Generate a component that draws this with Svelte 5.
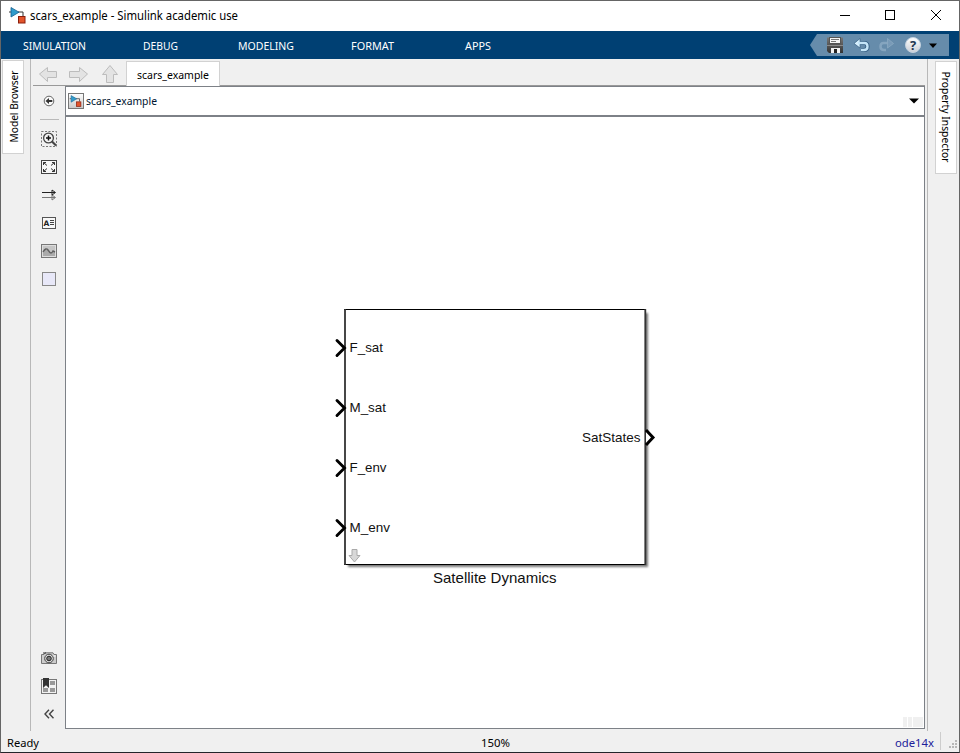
<script>
  const menus = [
    { label: 'SIMULATION', width: 106, fit: 63 },
    { label: 'DEBUG', width: 106, fit: 35 },
    { label: 'MODELING', width: 106, fit: 56 },
    { label: 'FORMAT', width: 106, fit: 43 },
    { label: 'APPS', width: 106, fit: 26 }
  ];
  const inputs = [
    { name: 'F_sat', y: 348, w: 33.5 },
    { name: 'M_sat', y: 408, w: 36.5 },
    { name: 'F_env', y: 468, w: 37 },
    { name: 'M_env', y: 528, w: 40.5 }
  ];
</script>

{#snippet label(text, width, height, size, base, color = '#000', family = 'Noto Sans')}
  <svg class="label" {width} {height}>
    <text x="0" y={base} font-size={size} font-family="'{family}', sans-serif" fill={color} textLength={width} lengthAdjust="spacingAndGlyphs">{text}</text>
  </svg>
{/snippet}

{#snippet modelMark()}
  <path d="M9 5H14V9" fill="none" stroke="#333" />
  <path d="M0 5H2" stroke="#333" />
  <path d="M2 .5V10L10 5.2Z" fill="#319ccc" stroke="#16618f" stroke-width=".8" />
  <rect x="9.5" y="9.5" width="6.5" height="6.5" fill="#e2542b" stroke="#8a1e0c" />
{/snippet}

<div class="window">
  <header class="title">
    <svg class="appicon" width="17" height="18" viewBox="0 0 17 18">{@render modelMark()}</svg>
    {@render label('scars_example - Simulink academic use', 208, 20, 12, 14)}
    <svg class="controls" width="120" height="30" viewBox="0 0 120 30" fill="none" stroke="#000" shape-rendering="crispEdges">
      <path d="M1 14.5H11" />
      <rect x="46.5" y="9.5" width="9" height="9" />
      <path d="M92 9L102 19M102 9L92 19" shape-rendering="auto" />
    </svg>
  </header>

  <nav class="ribbon">
    {#each menus as m}
      <div class="menu" style:width="{m.width}px">{@render label(m.label, m.fit, 18, 11, 14, '#fff')}</div>
    {/each}
    <svg class="quick" width="139" height="22" viewBox="810 34 139 22">
      <defs>
        <linearGradient id="disk" x2="0" y2="1"><stop stop-color="#777" /><stop offset="1" stop-color="#333" /></linearGradient>
        <linearGradient id="help" x2="0" y2="1"><stop stop-color="#fff" /><stop offset="1" stop-color="#c9ced6" /></linearGradient>
      </defs>
      <path d="M810 45L817 34H949V56H817Z" fill="#668cab" />
      <path d="M827 37.5H843V53H829L827 51Z" fill="url(#disk)" />
      <rect x="829.5" y="37.5" width="11" height="6" fill="#f5f5f5" stroke="#555" />
      <path d="M831 39.5H839M831 41.5H836" stroke="#777" />
      <path d="M827 45.5H843" stroke="#8a8a8a" />
      <path d="M831 48H840V53H831Z" fill="#f2f2f2" /><path d="M834 49H837V53H834Z" fill="#222" />
      <path d="M858 43H864.5Q867.5 43 867.5 46.5T864 50H861" fill="none" stroke="#355f83" stroke-width="4.2" />
      <path d="M854 43.5L860 38.5V48Z" fill="#d7f0fd" stroke="#355f83" stroke-width=".7" />
      <path d="M858 43H864.5Q867.5 43 867.5 46.5T864 50H861" fill="none" stroke="#c4e5f8" stroke-width="2.4" />
      <path d="M889 43H883.5Q880.5 43 880.5 46.5T884 50H886" fill="none" stroke="#85a5bf" stroke-width="2.5" />
      <path d="M893.5 43.5L887.5 38.5V48Z" fill="#789ab7" stroke="#8caac2" stroke-width=".8" />
      <circle cx="913" cy="45" r="7.5" fill="url(#help)" stroke="#c4d2df" />
      <text x="913" y="50" text-anchor="middle" font-family="Open Sans, sans-serif" font-size="13" font-weight="700" fill="#203650">?</text>
      <path d="M929 43.5H937L933 48Z" fill="#000" />
    </svg>
  </nav>

  <main class="body">
    <aside class="rail left">
      <div class="sidetab model">
        <svg width="20" height="91" viewBox="0 0 20 91"><text transform="translate(15 81.5) rotate(-90)" font-family="Noto Sans, sans-serif" font-size="11.3" textLength="72" lengthAdjust="spacingAndGlyphs">Model Browser</text></svg>
      </div>
    </aside>

    <section class="editor">
      <div class="tabs">
        <svg width="93" height="26" viewBox="33 59 93 26" fill="#e3e3e3" stroke="#bcbcbc">
          <path d="M39.5 74L47.5 67.5V71.5H56.5V77.5H47.5V81.5Z" />
          <path d="M87.5 74L79.5 67.5V71.5H69.5V77.5H79.5V81.5Z" />
          <path d="M110 65.5L117.5 74.5H113.5V82.5H106.5V74.5H102.5Z" />
        </svg>
        <div class="tab">{@render label('scars_example', 72, 18, 11.3, 14)}</div>
      </div>

      <div class="work">
        <div class="palette">
          <div class="tool first"><svg width="12" height="12" viewBox="0 0 12 12"><circle cx="6" cy="6" r="4.8" fill="#f8f8f8" stroke="#666" /><path d="M2.5 6L6 3V5H9.3V7H6V9Z" fill="#333" /></svg></div>
          <div class="rule"></div>
          <div class="tool"><svg width="16" height="16" viewBox="0 0 16 16"><rect x=".5" y=".5" width="15" height="15" fill="none" stroke="#777" stroke-dasharray="2 1.5" /><circle cx="7.5" cy="7" r="4.9" fill="#f5f5f5" stroke="#444" stroke-width="1.3" /><path d="M5 7H10M7.5 4.5V9.5" stroke="#111" stroke-width="1.5" /><path d="M11 10.5L15 14.5" stroke="#444" stroke-width="2.2" /></svg></div>
          <div class="tool"><svg width="16" height="14" viewBox="0 0 16 14"><rect x=".5" y=".5" width="15" height="13" fill="#f7f7f7" stroke="#444" /><path d="M2.5 5V2.5H5M2.5 2.5L6 5.5M11 2.5H13.5V5M13.5 2.5L10 5.5M2.5 9V11.5H5M2.5 11.5L6 8.5M13.5 9V11.5H11M13.5 11.5L10 8.5" fill="none" stroke="#333" /></svg></div>
          <div class="tool"><svg width="16" height="12" viewBox="0 0 16 12" fill="#eee"><path d="M1 8.5H14M11 6L14.5 8.5L11 11Z" stroke="#777" /><path d="M1 3.5H14M11 1L14.5 3.5L11 6Z" stroke="#222" /></svg></div>
          <div class="tool"><svg width="14" height="12" viewBox="0 0 14 12"><rect x=".5" y=".5" width="13" height="11" fill="#f8f8f8" stroke="#555" /><text x="1.5" y="8.6" font-size="7.5" font-weight="700" font-family="DejaVu Sans, sans-serif" fill="#222">A</text><path d="M8 3.5H12M8 5.5H12M8 7.5H12" stroke="#444" /></svg></div>
          <div class="tool"><svg width="16" height="14" viewBox="0 0 16 14"><rect x=".5" y=".5" width="15" height="13" fill="#ddd" stroke="#777" /><rect x="2" y="2" width="12" height="10" fill="#c5c5c5" /><path d="M2 8Q5 3 7 6T10 9T12 7L14 8V12H2Z" fill="#aaa" /><path d="M2 8Q5 3 7 6T10 9T12 7L14 8" fill="none" stroke="#606060" stroke-width="1.4" /></svg></div>
          <div class="tool"><svg width="14" height="14"><rect x=".5" y=".5" width="13" height="13" fill="#e8e8f8" stroke="#888" /></svg></div>
          <div class="spacer"></div>
          <div class="tool"><svg width="16" height="12" viewBox="0 0 16 12"><path d="M.5 2.5H3L4 .8H12L13 2.5H15.5V11.5H.5Z" fill="#ccc" stroke="#777" /><path d="M2 1H5" stroke="#333" /><circle cx="8" cy="6.5" r="4.3" fill="#ddd" stroke="#444" /><circle cx="8" cy="6.5" r="2.3" fill="#777" stroke="#222" /><rect x="12.5" y="3.5" width="2" height="1" fill="#fff" /></svg></div>
          <div class="tool"><svg width="16" height="16" viewBox="0 0 16 16"><rect x=".5" y="1.5" width="15" height="14" fill="#f2f2f2" stroke="#777" /><path d="M9 3H14V7H9ZM2 10H7V14H2ZM9 10H14V14H9Z" fill="#999" /><path d="M2 0H8V10L5 7.3L2 10Z" fill="#333" /></svg></div>
          <div class="tool"><svg width="10" height="10" viewBox="0 0 10 10" fill="none" stroke="#444" stroke-width="1.4"><path d="M5 .7L1 5L5 9.3M9.5 .7L5.5 5L9.5 9.3" /></svg></div>
        </div>

        <div class="document">
          <div class="address">
            <svg width="16" height="16" viewBox="0 0 16 16"><defs><linearGradient id="chip" x2="0" y2="1"><stop stop-color="#fff" /><stop offset="1" stop-color="#c9c9c9" /></linearGradient></defs><rect x=".5" y=".5" width="15" height="15" fill="url(#chip)" stroke="#777" /><g transform="translate(1.7 2.2) scale(.7)">{@render modelMark()}</g></svg>
            {@render label('scars_example', 71, 18, 11.3, 13, '#001530')}
            <svg class="drop" width="10" height="6"><path d="M0 .5H10L5 5.5Z" /></svg>
          </div>
          <svg class="canvas" width="858" height="611" viewBox="66 117 858 611">
            <defs><filter id="shade" x="-5%" y="-5%" width="110%" height="110%"><feGaussianBlur stdDeviation="1.3" /></filter></defs>
            <rect x="348" y="313" width="300" height="254" fill="#777" filter="url(#shade)" />
            <rect x="345" y="309.5" width="300.5" height="255" fill="#fff" />
            <path d="M344 309.5H646M344 564.5H646" stroke="#000" stroke-width="1.2" />
            <path d="M345 309V565M645.3 309V565" stroke="#333" stroke-width="1.8" />
            <g font-family="Liberation Sans, Arial, sans-serif" font-size="13.5" fill="#111">
              {#each inputs as p}
                <path d="M337 {p.y - 7.5}L344.5 {p.y}L337 {p.y + 7.5}" fill="none" stroke="#000" stroke-width="2.9" stroke-linecap="round" />
                <text x="349.5" y={p.y + 4.2} textLength={p.w} lengthAdjust="spacingAndGlyphs">{p.name}</text>
              {/each}
              <text x="582" y="442.2" textLength="58.5" lengthAdjust="spacingAndGlyphs">SatStates</text>
              <text x="433" y="583" font-size="15" textLength="123.5" lengthAdjust="spacingAndGlyphs">Satellite Dynamics</text>
            </g>
            <path d="M646 430L653 437.5L646 445" fill="#fff" stroke="#000" stroke-width="3" />
            <path d="M352 549.5H357V555.5H360L354.5 562L349 555.5H352Z" fill="#d8d8d8" stroke="#aaa" />
            <path d="M903 717H907V727H903ZM908 717H912V727H908ZM913 717H923V727H913Z" fill="#f0f0f0" />
          </svg>
        </div>
      </div>
    </section>

    <aside class="rail right">
      <div class="sidetab inspector">
        <svg width="20" height="111" viewBox="0 0 20 111"><text transform="translate(6 9.5) rotate(90)" font-family="Noto Sans, sans-serif" font-size="11.3" textLength="91" lengthAdjust="spacingAndGlyphs">Property Inspector</text></svg>
      </div>
    </aside>
  </main>

  <footer class="status">
    <div class="ready">{@render label('Ready', 32, 18, 11.5, 15)}</div>
    <div class="zoom">{@render label('150%', 29, 18, 11.3, 15)}</div>
    <div class="solver">{@render label('ode14x', 39, 18, 11.5, 15, '#20209a')}</div>
    <div class="divider"></div>
    <svg class="grip" width="8" height="8" fill="#b7b7b7"><path d="M6 0H8V2H6ZM3 3H5V5H3ZM6 3H8V5H6ZM0 6H2V8H0ZM3 6H5V8H3ZM6 6H8V8H6Z" /></svg>
  </footer>
</div>

<style>
  :global(body) { margin: 0; }
  .window { box-sizing: border-box; width: 960px; height: 753px; border: 1px solid #656565; border-bottom-color: #24242a; display: flex; flex-direction: column; background: #f0f0f0; overflow: hidden; }
  svg { display: block; flex: none; }
  .label { overflow: visible; }
  .title { height: 30px; background: #fff; display: flex; align-items: center; flex: none; padding-left: 8px; }
  .appicon { margin-right: 4px; }
  .controls { margin-left: auto; }
  .ribbon { height: 28px; background: #004073; display: flex; align-items: center; flex: none; }
  .menu { display: flex; justify-content: center; }
  .quick { margin-left: auto; margin-right: 10px; }
  .body { display: flex; height: 672px; flex: none; }
  .rail { box-sizing: border-box; flex: none; height: 672px; }
  .left { width: 30px; border-right: 1px solid #b8b8b8; }
  .right { width: 32px; border-left: 1px solid #b8b8b8; }
  .sidetab { background: #fff; border: 1px solid #d2d2d2; width: 20px; }
  .model { margin: 1px 0 0 1px; height: 92px; }
  .inspector { margin: 2px 0 0 7px; height: 111px; }
  .editor { width: 896px; display: flex; flex-direction: column; height: 670px; }
  .tabs { height: 27px; box-sizing: border-box; margin: 0 2px; display: flex; border-bottom: 1px solid #999; }
  .tab { box-sizing: border-box; width: 94px; height: 25px; margin-top: 2px; border: 1px solid #d2d2d2; border-bottom: 0; background: #fff; display: flex; justify-content: center; align-items: center; }
  .work { display: flex; height: 643px; }
  .palette { box-sizing: border-box; width: 34px; height: 643px; padding: 0 0 1px 2px; display: flex; flex-direction: column; align-items: center; }
  .tool { height: 28px; width: 32px; display: flex; align-items: center; justify-content: center; flex: none; }
  .first { height: 30px; }
  .rule { width: 19px; height: 1px; background: #b9b9b9; margin: 3px 0 5px; flex: none; }
  .spacer { flex: 1; }
  .document { box-sizing: border-box; width: 860px; height: 643px; border: 1px solid #7d8187; border-top: 0; background: #fff; }
  .address { box-sizing: border-box; height: 31px; border-top: 1px solid #7d8187; border-bottom: 2px solid #7d8187; display: flex; align-items: center; gap: 2px; padding: 0 5px 0 2px; }
  .drop { margin-left: auto; }
  .status { height: 20px; display: flex; align-items: center; padding-left: 6px; }
  .zoom { margin-left: 442px; }
  .solver { margin-left: auto; }
  .divider { width: 1px; height: 18px; background: #cdcdcd; margin: 0 8px 0 6px; }
  .grip { margin: 5px 2px 0 0; }
</style>
